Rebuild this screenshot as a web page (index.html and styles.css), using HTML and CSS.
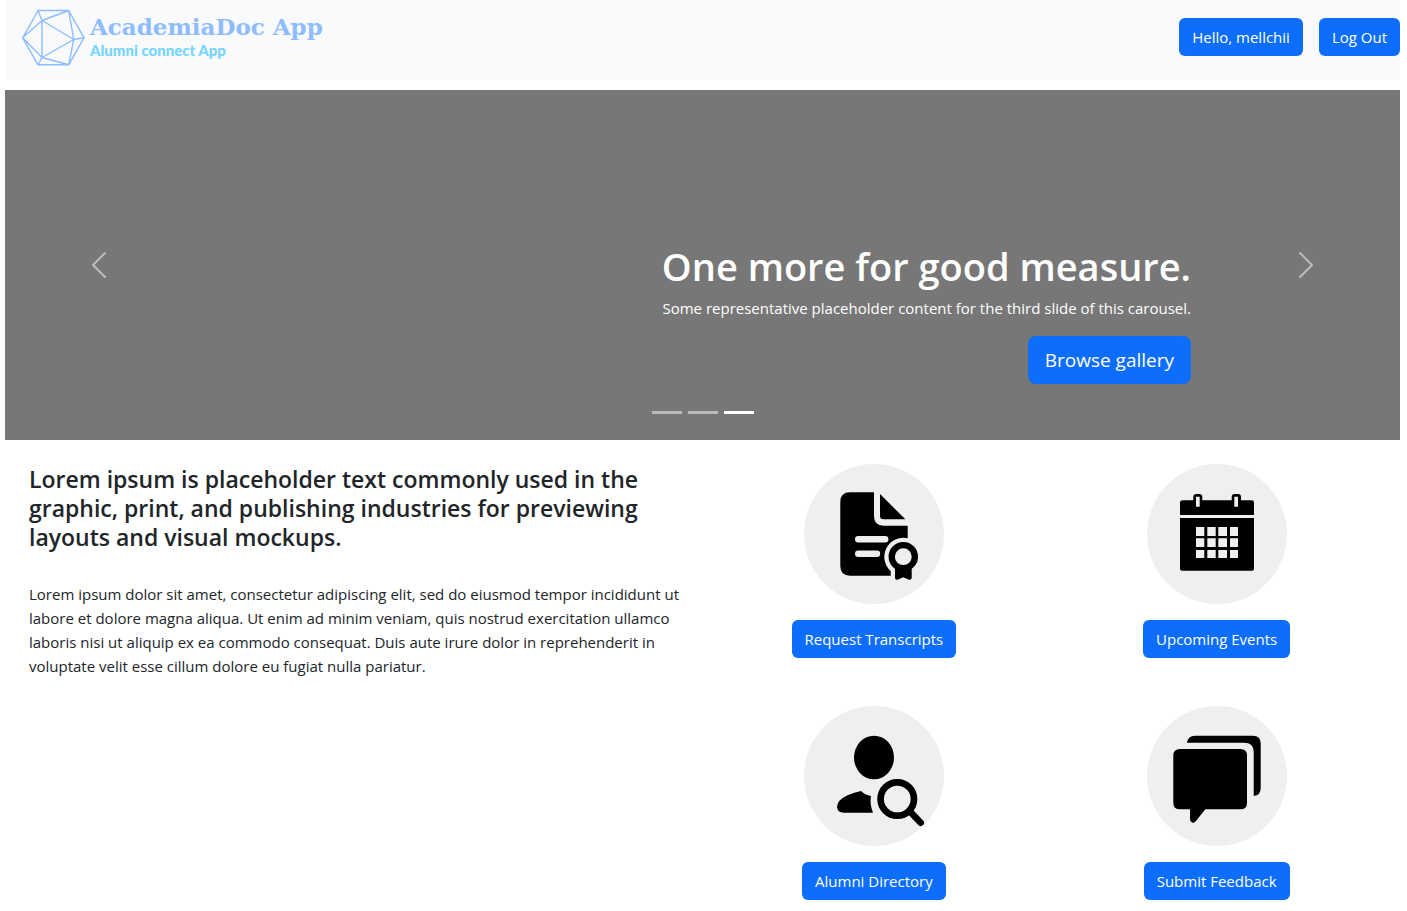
FILE: index.html
```html
<!DOCTYPE html>
<html lang="en">
<head>
<meta charset="utf-8">
<meta name="viewport" content="width=device-width, initial-scale=1">
<title>AcademiaDoc App</title>
<link rel="stylesheet" href="styles.css">
</head>
<body>
<header class="navbar">
  <a class="brand" href="#">
    <svg class="brand-mark" viewBox="22 9 63 57" aria-hidden="true">
      <path d="M22.7 37.8 38 10.5H68.7L84 37.8 68.7 64.8H38ZM42 20.5 38 10.5M42 20.5 68.7 10.5M42 20.5 22.7 37.8M42 20.5 73.7 39.5M42 20.5V57.5M42 57.5 73.7 39.5M42 57.5 22.7 37.8M42 57.5 38 64.8M42 57.5 68.7 64.8M73.7 39.5 68.7 10.5M73.7 39.5 68.7 64.8M73.7 39.5 84 37.8"/>
    </svg>
    <span class="brand-text">
      <span class="brand-name">AcademiaDoc App</span>
      <span class="brand-tagline">Alumni connect App</span>
    </span>
  </a>
  <nav class="nav-actions">
    <button class="btn" type="button">Hello, mellchii</button>
    <button class="btn" type="button">Log Out</button>
  </nav>
</header>

<main>
  <section class="carousel">
    <button class="carousel-control" type="button" aria-label="Previous">
      <svg viewBox="0 0 16 16"><path d="M11 2 5 8 11 14"/></svg>
    </button>
    <div class="carousel-caption">
      <h1>One more for good measure.</h1>
      <p>Some representative placeholder content for the third slide of this carousel.</p>
      <a class="btn btn-lg" href="#">Browse gallery</a>
    </div>
    <div class="carousel-indicators">
      <button type="button" aria-label="Slide 1"></button>
      <button type="button" aria-label="Slide 2"></button>
      <button class="active" type="button" aria-label="Slide 3"></button>
    </div>
    <button class="carousel-control" type="button" aria-label="Next">
      <svg viewBox="0 0 16 16"><path d="M5 2 11 8 5 14"/></svg>
    </button>
  </section>

  <div class="content">
    <section class="intro">
      <h2>Lorem ipsum is placeholder text commonly used in the graphic, print, and publishing industries for previewing layouts and visual mockups.</h2>
      <p>Lorem ipsum dolor sit amet, consectetur adipiscing elit, sed do eiusmod tempor incididunt ut labore et dolore magna aliqua. Ut enim ad minim veniam, quis nostrud exercitation ullamco laboris nisi ut aliquip ex ea commodo consequat. Duis aute irure dolor in reprehenderit in voluptate velit esse cillum dolore eu fugiat nulla pariatur.</p>
    </section>
    <section class="features">
      <div class="feature">
        <svg class="feature-icon" viewBox="0 0 140 140" aria-hidden="true">
          <path d="M46 28.3H70V52Q70 61.7 79.5 61.7H103.7V74.2A19 19 0 0 0 86.7 106.9V111.7H46Q36.3 111.7 36.3 102V38Q36.3 28.3 46 28.3Z"/>
          <path d="M76 30 101.3 55.3H79.5Q76 55.3 76 52Z"/>
          <path class="cut-line" d="M54.2 75.2H81.2M54.2 89.8H73"/>
          <path d="M91 103H107.7V114Q107 116.5 104.5 115.6L99.3 113.3 94.2 115.6Q91.5 116.5 91 114Z"/>
          <circle cx="99.3" cy="92.7" r="14.7"/>
          <circle class="cut" cx="99.3" cy="92.7" r="8.4"/>
        </svg>
        <a class="btn" href="#">Request Transcripts</a>
      </div>
      <div class="feature">
        <svg class="feature-icon" viewBox="0 0 140 140" aria-hidden="true">
          <path d="M33 51V38.5Q33 36.3 35.5 36.3H46.3V33Q46.3 30 49.3 30H52.3Q55.3 30 55.3 33V36.3H84.7V33Q84.7 30 87.7 30H91Q94 30 94 33V36.3H104.5Q107 36.3 107 38.5V51Z"/>
          <path d="M33 54H107V104.7Q107 106.7 105 106.7H35Q33 106.7 33 104.7Z"/>
          <path class="cut" d="M49 32.7h3.7v10H49ZM87.3 32.7H91v10h-3.7ZM49 63h8.3v9H49ZM60.3 63h8.4v9h-8.4ZM71.3 63H80v9h-8.7ZM83 63h8v9h-8ZM49 74.3h8.3V83H49ZM60.3 74.3h8.4V83h-8.4ZM71.3 74.3H80V83h-8.7ZM83 74.3h8V83h-8ZM49 86h8.3v8H49ZM60.3 86h8.4v8h-8.4ZM71.3 86H80v8h-8.7ZM83 86h8v8h-8Z"/>
        </svg>
        <a class="btn" href="#">Upcoming Events</a>
      </div>
      <div class="feature">
        <svg class="feature-icon" viewBox="0 0 140 140" aria-hidden="true">
          <ellipse cx="70" cy="51.5" rx="20" ry="21.8"/>
          <path d="M57 85Q61 89 67 90 65.5 98 69 106.7H40Q33 106.7 33 100.5 33.5 94 43 89.5 49 86.5 57 85Z"/>
          <circle class="lens" cx="93.3" cy="93" r="16.7"/>
          <path class="handle" d="M105.5 105 116.7 116.7"/>
        </svg>
        <a class="btn" href="#">Alumni Directory</a>
      </div>
      <div class="feature">
        <svg class="feature-icon" viewBox="0 0 140 140" aria-hidden="true">
          <path d="M33 43H93.5Q100 43 100 49.5V97Q100 103.3 93.5 103.3H58.3L49 115Q47 117.5 45 116.5 43 116 43 113V103.3H33Q26.3 103.3 26.3 97V49.5Q26.3 43 33 43Z"/>
          <path d="M40 36.7Q41 29.7 48 29.7H106Q113.7 29.7 113.7 37.5V82Q113.7 89.5 106.7 90V46Q106.7 36.7 97 36.7Z"/>
        </svg>
        <a class="btn" href="#">Submit Feedback</a>
      </div>
    </section>
  </div>
</main>
</body>
</html>
```
FILE: styles.css
```css
* {
  box-sizing: border-box;
}

body {
  margin: 0 7px 0 5px;
  background: #fff;
  color: #212529;
  font: 15px/24px "Open Sans", "Noto Sans", sans-serif;
}

h1, h2, p {
  margin: 0;
}

.navbar {
  display: flex;
  justify-content: space-between;
  align-items: flex-start;
  min-height: 80px;
  margin-bottom: 10px;
  padding-left: 17px;
  background: #f8fafc;
}

.brand {
  display: flex;
  gap: 5px;
  padding-top: 9px;
  text-decoration: none;
}

.brand-mark {
  width: 63px;
  height: 57px;
  fill: none;
  stroke: #8fbcff;
  stroke-width: 1.4;
  stroke-linejoin: round;
}

.brand-text {
  display: flex;
  flex-direction: column;
  padding-top: 4px;
}

.brand-name {
  color: #8fbcff;
  font: bold 23px/28px "DejaVu Serif", serif;
}

.brand-tagline {
  color: #76d5ff;
  font: 900 15px/18px Lato, sans-serif;
}

.nav-actions {
  display: flex;
  gap: 16px;
  padding-top: 18px;
}

.btn {
  display: inline-block;
  padding: 7px 13px;
  border: 0;
  border-radius: 6px;
  background: #0d6efd;
  color: #fff;
  font: inherit;
  text-decoration: none;
  white-space: nowrap;
  cursor: pointer;
}

.btn-lg {
  padding: 10px 17px;
  border-radius: 8px;
  font-size: 19px;
  line-height: 28px;
}

.carousel {
  position: relative;
  display: flex;
  justify-content: space-between;
  min-height: 350px;
  background: #777;
  color: #fff;
}

.carousel-control {
  width: 188px;
  padding: 0;
  border: 0;
  background: none;
  opacity: 0.5;
  cursor: pointer;
}

.carousel-control svg {
  width: 32px;
  height: 32px;
  fill: none;
  stroke: #fff;
  stroke-linecap: round;
  stroke-linejoin: round;
  vertical-align: middle;
}

.carousel-caption {
  flex: 1;
  align-self: flex-end;
  padding: 0 21px 56px 0;
  text-align: right;
}

.carousel-caption h1 {
  margin-bottom: 6px;
  font-size: 38px;
  font-weight: 600;
  line-height: 48px;
}

.carousel-caption p {
  margin-bottom: 16px;
}

.carousel-caption .btn {
  vertical-align: top;
}

.carousel-indicators {
  position: absolute;
  right: 0;
  bottom: 26px;
  left: 0;
  display: flex;
  justify-content: center;
  gap: 6px;
}

.carousel-indicators button {
  width: 30px;
  height: 3px;
  padding: 0;
  border: 0;
  background: #fff;
  opacity: 0.5;
}

.carousel-indicators .active {
  opacity: 1;
}

.content {
  display: grid;
  grid-template-columns: 1fr 1fr;
  padding-top: 24px;
}

.intro {
  padding: 1px 12px 0 24px;
}

.intro h2 {
  margin-bottom: 30px;
  font-size: 23px;
  font-weight: 600;
  line-height: 29px;
}

.features {
  display: grid;
  grid-template-columns: 1fr 1fr;
  align-content: start;
  row-gap: 48px;
  padding-right: 12px;
}

.feature {
  display: flex;
  flex-direction: column;
  align-items: center;
  gap: 16px;
}

.feature-icon {
  width: 140px;
  height: 140px;
  border-radius: 50%;
  background: #efefef;
}

.cut {
  fill: #efefef;
}

.cut-line {
  stroke: #efefef;
  stroke-width: 6.4;
  stroke-linecap: round;
}

.lens {
  fill: none;
  stroke: #000;
  stroke-width: 6.7;
}

.handle {
  stroke: #000;
  stroke-width: 6.7;
  stroke-linecap: round;
}
```
